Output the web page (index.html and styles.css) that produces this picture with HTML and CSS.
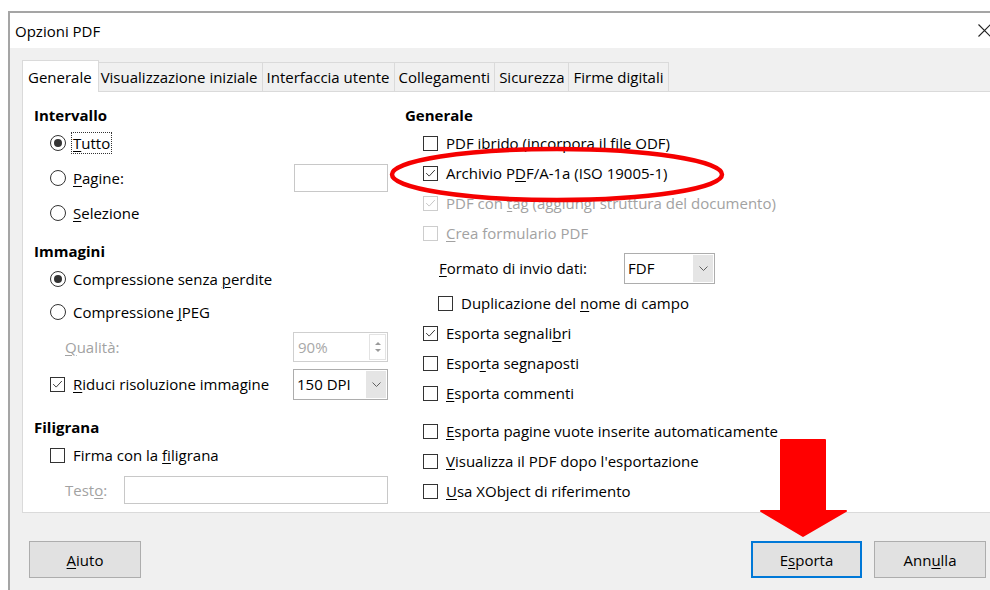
FILE: index.html
```html
<!DOCTYPE html>
<html lang="it">
<head>
<meta charset="utf-8">
<title>Opzioni PDF</title>
<link rel="stylesheet" href="styles.css">
</head>
<body>
<div class="dialog">
  <header class="titlebar">
    <span class="title">Opzioni PDF</span>
    <svg class="close" viewBox="0 0 13 13" width="13" height="13"><path d="M0.5 0.5 L12.5 12.5 M12.5 0.5 L0.5 12.5"/></svg>
  </header>

  <div class="dialog-body">
    <nav class="tabs">
      <span class="tab active">Generale</span>
      <span class="tab">Visualizzazione iniziale</span>
      <span class="tab">Interfaccia utente</span>
      <span class="tab">Collegamenti</span>
      <span class="tab">Sicurezza</span>
      <span class="tab">Firme digitali</span>
    </nav>

    <section class="pane">
      <!-- Intervallo / Immagini / Filigrana -->
      <div class="col col-left">
        <div class="group">
          <div class="group-title">Intervallo</div>
          <div class="opt-list">
            <label class="row"><span class="radio on"></span><span class="lbl focus"><u>T</u>utto</span></label>
            <label class="row field"><span class="radio"></span><span class="lbl"><u>P</u>agine:</span><span class="entry pages"></span></label>
            <label class="row"><span class="radio"></span><span class="lbl"><u>S</u>elezione</span></label>
          </div>
        </div>

        <div class="group gap-img">
          <div class="group-title">Immagini</div>
          <div class="opt-list">
            <label class="row"><span class="radio on"></span><span class="lbl">Compressione senza <u>p</u>erdite</span></label>
            <label class="row"><span class="radio"></span><span class="lbl">Compressione <u>J</u>PEG</span></label>
            <div class="row field sub">
              <span class="lbl dim"><u>Q</u>ualità:</span>
              <span class="spin">
                <span class="spin-val">90%</span>
                <span class="spin-btns"><span class="up"></span><span class="down"></span></span>
              </span>
            </div>
            <div class="row field">
              <span class="cb on"><svg viewBox="0 0 15 15"><path d="M2.5 7 L6 10.5 L12.5 3.5"/></svg></span>
              <span class="lbl"><u>R</u>iduci risoluzione immagine</span>
              <span class="combo dpi"><span class="combo-val">150 DPI</span><span class="combo-btn"><svg viewBox="0 0 9 5"><path d="M0.5 0.5 L4.5 4.5 L8.5 0.5"/></svg></span></span>
            </div>
          </div>
        </div>

        <div class="group gap-wm">
          <div class="group-title">Filigrana</div>
          <div class="opt-list">
            <label class="row"><span class="cb"></span><span class="lbl">Firma con la <u>f</u>iligrana</span></label>
            <div class="row field sub">
              <span class="lbl dim">Test<u>o</u>:</span>
              <span class="entry wm-text"></span>
            </div>
          </div>
        </div>
      </div>

      <!-- Generale -->
      <div class="col col-right">
        <div class="group-title">Generale</div>
        <div class="check-list">
          <label class="row"><span class="cb"></span><span class="lbl">PDF <u>i</u>brido (incorpora il file ODF)</span></label>
          <label class="row"><span class="cb on"><svg viewBox="0 0 15 15"><path d="M2.5 7 L6 10.5 L12.5 3.5"/></svg></span><span class="lbl">Archivio P<u>D</u>F/A-1a (ISO 19005-1)</span></label>
          <label class="row off"><span class="cb on"><svg viewBox="0 0 15 15"><path d="M2.5 7 L6 10.5 L12.5 3.5"/></svg></span><span class="lbl">PDF con <u>t</u>ag (aggiungi struttura del documento)</span></label>
          <label class="row off"><span class="cb"></span><span class="lbl"><u>C</u>rea formulario PDF</span></label>
          <div class="row form-row">
            <span class="lbl form-lbl"><u>F</u>ormato di invio dati:</span>
            <span class="combo fdf"><span class="combo-val">FDF</span><span class="combo-btn"><svg viewBox="0 0 9 5"><path d="M0.5 0.5 L4.5 4.5 L8.5 0.5"/></svg></span></span>
          </div>
          <label class="row dup"><span class="cb"></span><span class="lbl">Duplicazione del <u>n</u>ome di campo</span></label>
          <label class="row"><span class="cb on"><svg viewBox="0 0 15 15"><path d="M2.5 7 L6 10.5 L12.5 3.5"/></svg></span><span class="lbl">Esporta segnali<u>b</u>ri</span></label>
          <label class="row"><span class="cb"></span><span class="lbl">Espo<u>r</u>ta segnaposti</span></label>
          <label class="row"><span class="cb"></span><span class="lbl"><u>E</u>sporta commenti</span></label>
        </div>
        <div class="check-list gap-more">
          <label class="row"><span class="cb"></span><span class="lbl"><u>E</u>sporta pagine vuote inserite automaticamente</span></label>
          <label class="row"><span class="cb"></span><span class="lbl"><u>V</u>isualizza il PDF dopo l'esportazione</span></label>
          <label class="row"><span class="cb"></span><span class="lbl"><u>U</u>sa XObject di riferimento</span></label>
        </div>
      </div>
    </section>

    <footer class="buttons">
      <button class="btn"><u>A</u>iuto</button>
      <button class="btn default">E<u>s</u>porta</button>
      <button class="btn">Ann<u>u</u>lla</button>
    </footer>
  </div>
</div>

<!-- annotation layer: red ring and arrow drawn over the dialog -->
<svg class="marks" viewBox="0 0 990 590" width="990" height="590">
  <ellipse cx="557" cy="174.5" rx="165" ry="25.5"/>
  <path class="arrow" d="M781 440 H825 V511 H846 L803 536 L761 511 H781 Z"/>
</svg>
</body>
</html>
```

FILE: styles.css
```css
* {
  box-sizing: border-box;
}

html,
body {
  margin: 0;
  padding: 0;
}

body {
  position: relative;
  width: 990px;
  height: 590px;
  overflow: hidden;
  background: #fff;
  font-family: "Open Sans", "Noto Sans", sans-serif;
  font-size: 15px;
  line-height: 20px;
  color: #000;
}

u {
  text-decoration-thickness: 1px;
  text-underline-offset: 2px;
}

/* window frame */
.dialog {
  margin: 11px 0 0 8px;
  width: 994px;
  height: 579px;
  border-top: 2px solid #a5a5a5;
  border-left: 2px solid #a5a5a5;
  display: flex;
  flex-direction: column;
}

.titlebar {
  flex: none;
  height: 35px;
  background: #fff;
  display: flex;
  align-items: center;
  justify-content: space-between;
  padding: 0 11px 0 5px;
}

.close path {
  fill: none;
  stroke: #222;
  stroke-width: 1.1;
}

.dialog-body {
  flex: 1;
  background: #f0f0f0;
  padding: 12px 0 0 12px;
  display: flex;
  flex-direction: column;
}

/* tab strip */
.tabs {
  flex: none;
  height: 31px;
  display: flex;
  align-items: flex-end;
}

.tab {
  height: 29px;
  padding: 0 4px;
  margin-left: -1px;
  border: 1px solid #dadada;
  border-bottom: none;
  background: #f0f0f0;
  display: flex;
  align-items: center;
  white-space: nowrap;
}

.tab.active {
  position: relative;
  z-index: 1;
  height: 32px;
  margin: 0 0 -1px 0;
  padding: 0 6px 0 5px;
  background: #fff;
}

.tab.active + .tab {
  padding-left: 2px;
}

/* page of the notebook */
.pane {
  flex: none;
  height: 422px;
  background: #fff;
  border: 1px solid #dadada;
  display: flex;
  padding: 13px 0 0 11px;
}

.col-left {
  width: 354px;
  flex: none;
}

.col-right {
  margin-left: 17px;
  flex: none;
}

.group-title {
  font-weight: 700;
  height: 20px;
}

.gap-img {
  margin-top: 13px;
}

.gap-wm {
  margin-top: 16px;
}

.opt-list {
  margin-top: 3px;
  padding-left: 16px;
  display: flex;
  flex-direction: column;
  gap: 3px;
}

.check-list {
  margin-top: 3px;
  padding-left: 18px;
  display: flex;
  flex-direction: column;
}

.check-list.gap-more {
  margin-top: 8px;
}

.row {
  height: 30px;
  display: flex;
  align-items: center;
  white-space: nowrap;
}

.row.field {
  height: 34px;
}

.row.sub {
  padding-left: 15px;
}

.lbl {
  margin-left: 8px;
}

.radio + .lbl {
  margin-left: 7px;
}

.sub .lbl,
.form-lbl {
  margin-left: 0;
}

.lbl.focus {
  margin-left: 6px;
  padding: 0 1px;
  outline: 1px dotted #333;
  outline-offset: 0;
}

.dim,
.off .lbl {
  color: #a2a2a2;
}

/* radio buttons */
.radio {
  flex: none;
  width: 16px;
  height: 16px;
  border: 1px solid #333;
  border-radius: 50%;
  background: #fff;
  display: flex;
  align-items: center;
  justify-content: center;
}

.radio.on::after {
  content: "";
  width: 8px;
  height: 8px;
  border-radius: 50%;
  background: #333;
}

/* check boxes */
.cb {
  flex: none;
  width: 15px;
  height: 15px;
  border: 1px solid #333;
  background: #fff;
  display: flex;
}

.cb svg {
  width: 13px;
  height: 13px;
}

.cb path {
  fill: none;
  stroke: #333;
  stroke-width: 1.1;
}

.off .cb {
  border-color: #cdcdcd;
}

.off .cb path {
  stroke: #c4c4c4;
}

/* entry fields */
.entry {
  display: block;
  height: 28px;
  border: 1px solid #c8c8c8;
  background: #fff;
}

.entry.pages {
  width: 94px;
  margin-left: auto;
}

.entry.wm-text {
  width: 264px;
  margin-left: auto;
}

.spin {
  margin-left: auto;
  width: 95px;
  height: 30px;
  border: 1px solid #cfcfcf;
  display: flex;
  align-items: stretch;
}

.spin-val {
  flex: 1;
  padding-left: 4px;
  color: #a8a8a8;
  display: flex;
  align-items: center;
}

.spin-btns {
  width: 17px;
  margin: 1px;
  border: 1px solid #e3e3e3;
  display: flex;
  flex-direction: column;
  align-items: center;
  justify-content: center;
  gap: 4px;
}

.spin-btns .up,
.spin-btns .down {
  width: 0;
  height: 0;
  border-left: 3px solid transparent;
  border-right: 3px solid transparent;
}

.spin-btns .up {
  border-bottom: 3px solid #9a9a9a;
}

.spin-btns .down {
  border-top: 3px solid #9a9a9a;
}

/* drop-down lists */
.combo {
  height: 31px;
  border: 1px solid #adadad;
  background: #fff;
  display: flex;
  align-items: stretch;
}

.combo.dpi {
  margin-left: auto;
  width: 95px;
}

.combo.fdf {
  width: 91px;
}

.combo-val {
  flex: 1;
  padding-left: 3px;
  display: flex;
  align-items: center;
}

.combo-btn {
  width: 20px;
  margin: 1px;
  background: #e5e5e5;
  display: flex;
  align-items: center;
  justify-content: center;
}

.combo-btn svg {
  width: 9px;
  height: 5px;
}

.combo-btn path {
  fill: none;
  stroke: #606060;
  stroke-width: 1;
}

.form-row {
  height: 40px;
  padding-left: 16px;
}

.form-lbl {
  width: 185px;
}

.row.dup {
  padding-left: 15px;
}

/* dialog buttons */
.buttons {
  flex: 1;
  display: flex;
  align-items: flex-start;
  gap: 12px;
  padding: 28px 16px 0 7px;
}

.btn {
  width: 112px;
  height: 37px;
  padding: 0;
  border: 1px solid #adadad;
  background: #e1e1e1;
  font: inherit;
  color: #000;
}

.btn.default {
  margin-left: auto;
  width: 111px;
  border: 2px solid #0078d7;
}

/* red annotations over the dialog */
.marks {
  position: absolute;
  left: 0;
  top: 0;
  pointer-events: none;
}

.marks ellipse {
  fill: none;
  stroke: #f50000;
  stroke-width: 4.5;
}

.marks .arrow {
  fill: #ff0000;
  stroke: #ff0000;
  stroke-width: 2;
  stroke-linejoin: round;
}
```
